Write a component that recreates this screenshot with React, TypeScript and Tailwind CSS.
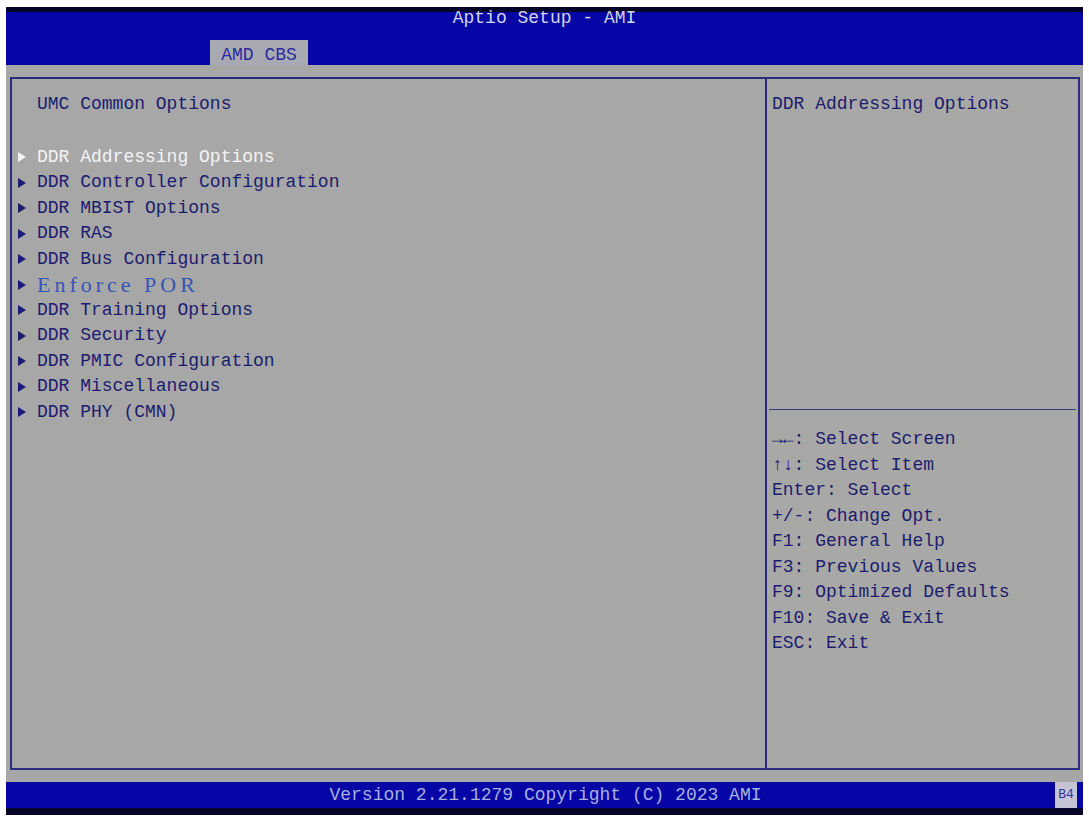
const items = [
  'DDR Addressing Options',
  'DDR Controller Configuration',
  'DDR MBIST Options',
  'DDR RAS',
  'DDR Bus Configuration',
  'Enforce POR',
  'DDR Training Options',
  'DDR Security',
  'DDR PMIC Configuration',
  'DDR Miscellaneous',
  'DDR PHY (CMN)',
];

const help = [
  '\u2192\u2190: Select Screen',
  '\u2191\u2193: Select Item',
  'Enter: Select',
  '+/-: Change Opt.',
  'F1: General Help',
  'F3: Previous Values',
  'F9: Optimized Defaults',
  'F10: Save & Exit',
  'ESC: Exit',
];

function Arrow({ active }: { active?: boolean }) {
  return (
    <svg width="8" height="10" viewBox="0 0 8 10" className="shrink-0">
      <polygon points="0,0 8,5 0,10" fill={active ? '#f2f2f2' : '#1c1c78'} />
    </svg>
  );
}

export default function App() {
  return (
    <div className="h-[820px] w-[1089px] bg-white pb-[5px] pl-[6px] pr-[6px] pt-[7px] font-['Liberation_Mono',monospace] text-[18px]">
      <div className="flex h-full flex-col">
        {/* header */}
        <div className="flex h-[58px] flex-col border-t-[5px] border-[#05052a] bg-[#0606a6]">
          <div className="-mt-px text-center leading-[14px] text-[#d4d4e4]">Aptio Setup - AMI</div>
          <div className="flex flex-1 items-end pl-[204px]">
            <div className="h-[25px] w-[98px] bg-[#a9a9b3] text-center leading-[31px] text-[#2a2aa0]">AMD CBS</div>
          </div>
        </div>

        {/* body */}
        <div className="flex-1 bg-[#a7a7a8] pb-[12px] pl-[4px] pr-[3px] pt-[12px]">
          <div className="flex h-full border-2 border-[#2c2c7e]">
            <div className="w-[755px] border-r-2 border-[#2c2c7e] pl-[25px] pt-[13px] leading-[25.5px] text-[#1c1c6e]">
              <div>UMC Common Options</div>
              <div className="mt-[27px]">
                {items.map((label, i) => (
                  <div key={label} className="-ml-[19px] flex h-[25.5px] items-center gap-[11px]">
                    <Arrow active={i === 0} />
                    {label === 'Enforce POR' ? (
                      <span className="font-['Liberation_Serif',serif] text-[22px] tracking-[4px] text-[#3656b4]">{label}</span>
                    ) : (
                      <span className={i === 0 ? 'text-[#f4f4f4]' : ''}>{label}</span>
                    )}
                  </div>
                ))}
              </div>
            </div>

            <div className="flex flex-1 flex-col bg-[#a8a9a6] leading-[25.5px] text-[#1c1c6e]">
              <div className="mx-[2px] h-[331px] border-b border-[#3a3a7e] pl-[3px] pt-[13px]">DDR Addressing Options</div>
              <div className="pl-[5px] pt-[17px]">
                {help.map((line) => (
                  <div key={line} className="h-[25.5px]">{line}</div>
                ))}
              </div>
            </div>
          </div>
        </div>

        {/* footer */}
        <div className="flex h-[33px] border-b-[7px] border-[#05052a] bg-[#0606a6]">
          <div className="flex-1 pl-[30px] text-center leading-[26px] text-[#a8b0e0]">Version 2.21.1279 Copyright (C) 2023 AMI</div>
          <div className="mr-[6px] h-[26px] w-[22px] bg-[#c4c4d4] text-center text-[13px] leading-[26px] text-[#3030a0]">B4</div>
        </div>
      </div>
    </div>
  );
}
